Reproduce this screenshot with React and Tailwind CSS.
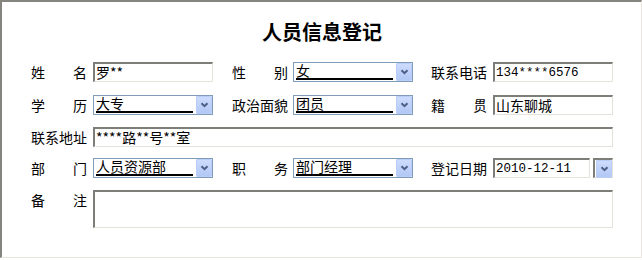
import React from "react";

const FONT = { fontFamily: '"Noto Sans CJK SC", "Noto Sans", sans-serif' };
const MONO = { fontFamily: '"Liberation Mono", "Noto Sans CJK SC", monospace' };

function Label({ text }) {
  const chars = text.split("");
  return (
    <div className="w-[56px] h-[20px] flex justify-between items-center text-[14px] leading-[20px] text-black shrink-0">
      {chars.map((c, i) => (
        <span key={i}>{c}</span>
      ))}
    </div>
  );
}

function TextBox({ value, width = "w-[120px]", mono = false }) {
  return (
    <div
      className={`${width} h-[20px] shrink-0 bg-white border-t-2 border-l-2 border-t-[#7e7e78] border-l-[#7e7e78] border-b border-r border-b-[#e4e2da] border-r-[#e4e2da] pl-[1px] text-black whitespace-nowrap overflow-hidden ${mono ? "text-[12.5px] leading-[18px]" : "text-[14px] leading-[17px]"}`}
      style={mono ? MONO : undefined}
    >
      {value}
    </div>
  );
}

function DropButton() {
  return (
    <div className="w-[16px] h-[18px] shrink-0 flex items-center justify-center bg-gradient-to-b from-[#cddbfd] to-[#b3c8f6] border border-[#b9cdf7] rounded-[1px]">
      <svg width="9" height="6" viewBox="0 0 9 6">
        <polyline points="1.5,1.2 4.5,4.2 7.5,1.2" fill="none" stroke="#4d6185" strokeWidth="2" />
      </svg>
    </div>
  );
}

function Select({ value }) {
  return (
    <div className="w-[120px] h-[20px] shrink-0 bg-white border border-[#7f9db9] flex items-start">
      <div className="flex-1 pl-[2px] pr-[3px]">
        <div className="h-[17px] border-b-2 border-black text-[14px] leading-[15px] text-black whitespace-nowrap">
          {value}
        </div>
      </div>
      <DropButton />
    </div>
  );
}

function DateBox({ value }) {
  return (
    <div className="flex items-center gap-[3px] shrink-0">
      <TextBox value={value} width="w-[97px]" mono />
      <div className="w-[20px] h-[20px] border-t-2 border-l-2 border-t-[#7e7e78] border-l-[#7e7e78] border-b border-r border-b-[#e4e2da] border-r-[#e4e2da] flex items-start pl-[1px]">
        <DropButton />
      </div>
    </div>
  );
}

export default function App() {
  return (
    <div className="w-[642px] h-[260px] bg-white" style={FONT}>
      <div className="w-[642px] h-[258px] border-t-2 border-l-2 border-t-[#85857d] border-l-[#85857d] border-b border-r border-b-[#e8e6de] border-r-[#e8e6de] bg-white pl-[29px]">
        <div className="mt-[17px] h-[26px] w-[582px] text-center text-[20px] leading-[26px] font-bold text-black">
          人员信息登记
        </div>

        <div className="mt-[17px] flex items-center">
          <Label text="姓名" />
          <div className="ml-[6px]"><TextBox value="罗**" /></div>
          <div className="ml-[19px]"><Label text="性别" /></div>
          <div className="ml-[5px]"><Select value="女" /></div>
          <div className="ml-[18px]"><Label text="联系电话" /></div>
          <div className="ml-[6px]"><TextBox value="134****6576" mono /></div>
        </div>

        <div className="mt-[13px] flex items-center">
          <Label text="学历" />
          <div className="ml-[6px]"><Select value="大专" /></div>
          <div className="ml-[19px]"><Label text="政治面貌" /></div>
          <div className="ml-[5px]"><Select value="团员" /></div>
          <div className="ml-[18px]"><Label text="籍贯" /></div>
          <div className="ml-[6px]"><TextBox value="山东聊城" /></div>
        </div>

        <div className="mt-[12px] flex items-center">
          <Label text="联系地址" />
          <div className="ml-[6px]"><TextBox value="****路**号**室" width="w-[520px]" /></div>
        </div>

        <div className="mt-[11px] flex items-center">
          <Label text="部门" />
          <div className="ml-[6px]"><Select value="人员资源部" /></div>
          <div className="ml-[19px]"><Label text="职务" /></div>
          <div className="ml-[5px]"><Select value="部门经理" /></div>
          <div className="ml-[18px]"><Label text="登记日期" /></div>
          <div className="ml-[6px]"><DateBox value="2010-12-11" /></div>
        </div>

        <div className="mt-[12px] flex items-start">
          <Label text="备注" />
          <div className="ml-[6px] w-[520px] h-[38px] bg-white border-t-2 border-l-2 border-t-[#7e7e78] border-l-[#7e7e78] border-b border-r border-b-[#e4e2da] border-r-[#e4e2da]" />
        </div>
      </div>
    </div>
  );
}
